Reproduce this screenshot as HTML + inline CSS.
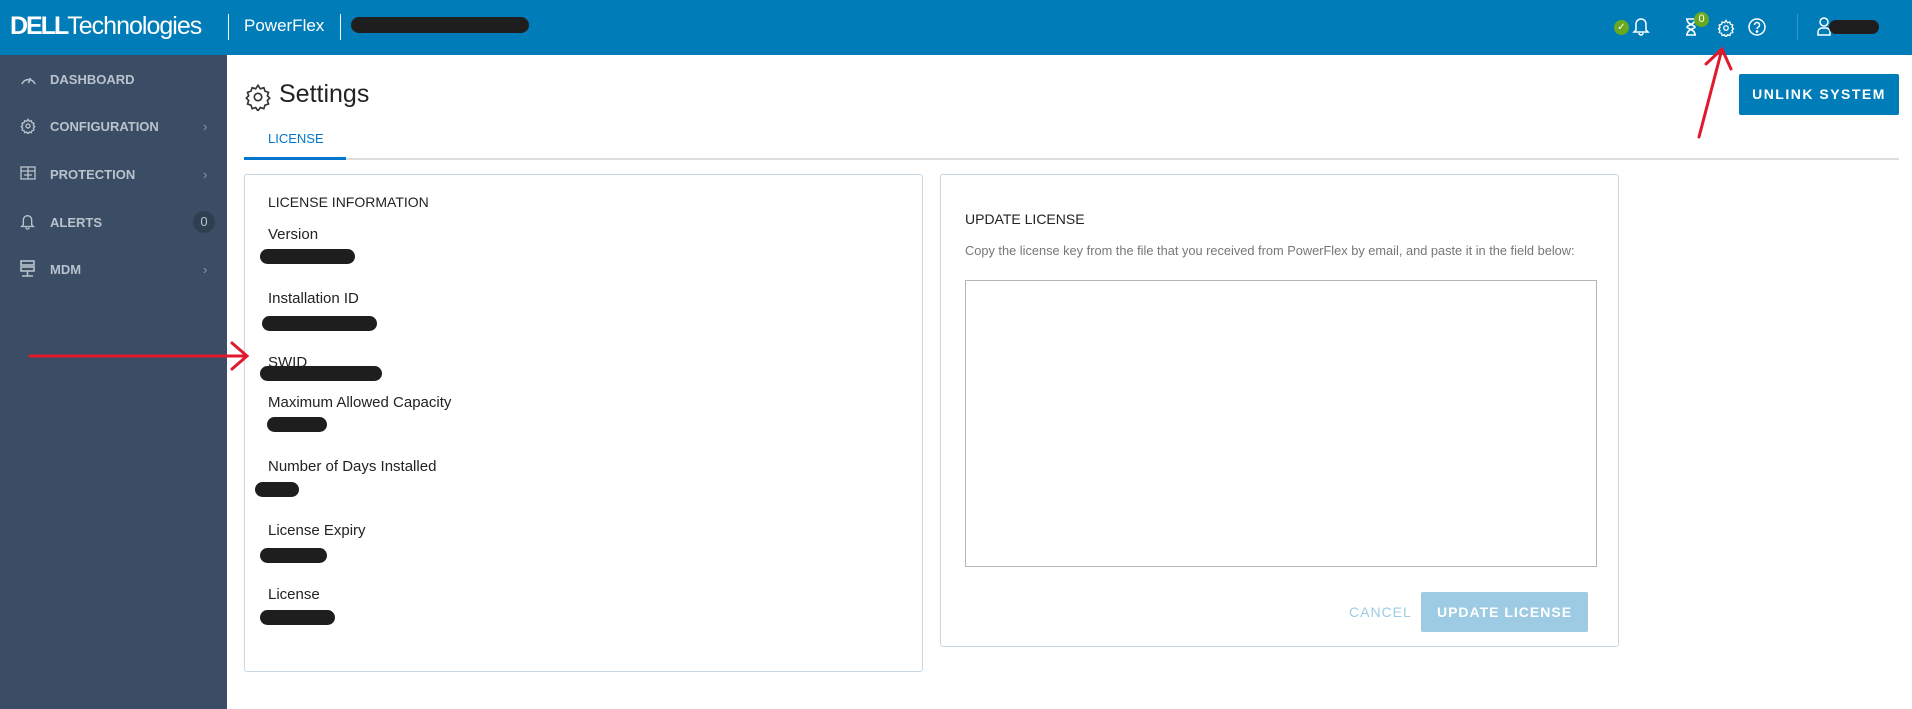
<!DOCTYPE html>
<html><head><meta charset="utf-8"><style>
*{margin:0;padding:0;box-sizing:border-box}
body{width:1912px;height:709px;position:relative;overflow:hidden;background:#fff;font-family:"Liberation Sans",sans-serif;color:#222}
.a{position:absolute}
#hd{left:0;top:0;width:1912px;height:55px;background:#007db8;color:#fff}
#sb{left:0;top:55px;width:227px;height:654px;background:#3b4d64}
.nav{position:absolute;left:50px;color:#b9c3ce;font-size:13px;font-weight:bold}
.chev{position:absolute;left:203px;color:#8b97a6;font-size:13px}
.bar{position:absolute;height:15px;background:#1e1e1e;border-radius:8px}
.lbl{position:absolute;left:268px;font-size:15px;color:#222}
.card{position:absolute;border:1px solid #c9d7e3;border-radius:3px;background:#fff}
</style></head><body>
<div id="hd" class="a">
 <div class="a" style="left:10px;top:12px;font-size:25px;letter-spacing:-1px"><b style="letter-spacing:-2px">DELL</b>Technologies</div>
 <div class="a" style="left:228px;top:14px;width:1px;height:26px;background:#fff"></div>
 <div class="a" style="left:244px;top:16px;font-size:17px">PowerFlex</div>
 <div class="a" style="left:340px;top:14px;width:1px;height:26px;background:#fff"></div>
 <div class="bar" style="left:351px;top:17px;width:178px;height:16px"></div>
 <div class="a" style="left:1614px;top:20px;width:15px;height:15px;border-radius:50%;background:#6aa91f;color:#fff;font-size:10px;text-align:center;line-height:15px">✓</div>
 <svg class="a" style="left:1632px;top:16px" width="18" height="20" viewBox="0 0 18 20" fill="none" stroke="#fff" stroke-width="1.5"><path d="M4 14V8a5 5 0 0 1 10 0v6l2 2H2z"/><path d="M7 17a2 2 0 0 0 4 0"/></svg>
 <svg class="a" style="left:1684px;top:17px" width="14" height="20" viewBox="0 0 14 20" fill="none" stroke="#fff" stroke-width="1.6"><path d="M2 2h10M2 18h10M3 2c0 6 8 6 8 8s-8 2-8 8M11 2c0 6-8 6-8 8s8 2 8 8"/></svg>
 <div class="a" style="left:1694px;top:12px;width:15px;height:15px;border-radius:50%;background:#6aa91f;font-size:11px;text-align:center;line-height:15px">0</div>
 <svg class="a" style="left:1717px;top:19px" width="18" height="18" viewBox="0 0 24 24" fill="none" stroke="#fff" stroke-width="1.8"><circle cx="12" cy="12" r="3"/><path d="M12 2l2 3 3-1 1 3 3 1-1 3 2 2-2 2 1 3-3 1-1 3-3-1-2 3-2-3-3 1-1-3-3-1 1-3-2-2 2-2-1-3 3-1 1-3 3 1z"/></svg>
 <svg class="a" style="left:1748px;top:18px" width="18" height="18" viewBox="0 0 18 18" fill="none" stroke="#fff" stroke-width="1.5"><circle cx="9" cy="9" r="8"/><path d="M6.5 7a2.5 2.5 0 1 1 3.5 2.3c-.7.4-1 .9-1 1.7"/><circle cx="9" cy="13.5" r=".6" fill="#fff"/></svg>
 <div class="a" style="left:1797px;top:14px;width:1px;height:26px;background:#3b95c9"></div>
 <svg class="a" style="left:1817px;top:17px" width="14" height="19" viewBox="0 0 14 19" fill="none" stroke="#fff" stroke-width="1.5"><circle cx="7" cy="5" r="4"/><path d="M1 18v-3a4 4 0 0 1 4-4h4a4 4 0 0 1 4 4v3z"/></svg>
 <div class="bar" style="left:1829px;top:20px;width:50px;height:14px"></div>
</div>
<div id="sb" class="a">
 <svg class="a" style="left:20px;top:18px" width="17" height="12" viewBox="0 0 17 12" fill="none" stroke="#b9c3ce" stroke-width="1.6"><path d="M2 11A7 7 0 0 1 15 11M8.5 10l2-5"/></svg>
 <div class="nav" style="top:17px">DASHBOARD</div>
 <svg class="a" style="left:20px;top:63px" width="16" height="16" viewBox="0 0 24 24" fill="none" stroke="#b9c3ce" stroke-width="2"><circle cx="12" cy="12" r="3"/><path d="M12 2l2 3 3-1 1 3 3 1-1 3 2 2-2 2 1 3-3 1-1 3-3-1-2 3-2-3-3 1-1-3-3-1 1-3-2-2 2-2-1-3 3-1 1-3 3 1z"/></svg>
 <div class="nav" style="top:64px">CONFIGURATION</div><div class="chev" style="top:64px">›</div>
 <svg class="a" style="left:20px;top:111px" width="16" height="14" viewBox="0 0 16 14" fill="none" stroke="#b9c3ce" stroke-width="1.3"><rect x="1" y="1" width="14" height="12"/><path d="M1 5h14M8 1v12M4 9h8"/></svg>
 <div class="nav" style="top:112px">PROTECTION</div><div class="chev" style="top:112px">›</div>
 <svg class="a" style="left:20px;top:158px" width="15" height="17" viewBox="0 0 18 20" fill="none" stroke="#b9c3ce" stroke-width="1.6"><path d="M4 14V8a5 5 0 0 1 10 0v6l2 2H2z"/><path d="M7 17a2 2 0 0 0 4 0"/></svg>
 <div class="nav" style="top:160px">ALERTS</div>
 <div class="a" style="left:193px;top:156px;width:22px;height:22px;border-radius:50%;background:#2f3f52;color:#b9c3ce;font-size:13px;text-align:center;line-height:22px">0</div>
 <svg class="a" style="left:20px;top:205px" width="15" height="18" viewBox="0 0 15 18" fill="none" stroke="#b9c3ce" stroke-width="1.6"><rect x="1" y="1" width="13" height="4"/><rect x="1" y="7" width="13" height="4"/><path d="M7.5 11v5M2 16h11"/></svg>
 <div class="nav" style="top:207px">MDM</div><div class="chev" style="top:207px">›</div>
</div>
<svg class="a" style="left:244px;top:83px" width="28" height="28" viewBox="0 0 24 24" fill="none" stroke="#333" stroke-width="1.4"><circle cx="12" cy="12" r="3.2"/><path d="M12 2l2 3 3-1 1 3 3 1-1 3 2 2-2 2 1 3-3 1-1 3-3-1-2 3-2-3-3 1-1-3-3-1 1-3-2-2 2-2-1-3 3-1 1-3 3 1z"/></svg>
<div class="a" style="left:279px;top:80px;font-size:25px;color:#222">Settings</div>
<div class="a" style="left:268px;top:131px;font-size:13px;color:#0076ce">LICENSE</div>
<div class="a" style="left:244px;top:158px;width:1655px;height:2px;background:#ddd"></div>
<div class="a" style="left:244px;top:157px;width:102px;height:3px;background:#0076ce"></div>
<div class="a" style="left:1739px;top:74px;width:160px;height:41px;background:#007db8;border-radius:2px;color:#fff;font-weight:bold;font-size:14px;letter-spacing:1.5px;text-align:center;line-height:41px">UNLINK SYSTEM</div>
<div class="card" style="left:244px;top:174px;width:679px;height:498px"></div>
<div class="lbl" style="top:194px;font-size:14px">LICENSE INFORMATION</div>
<div class="lbl" style="top:226px">Version</div>
<div class="lbl" style="top:290px">Installation ID</div>
<div class="lbl" style="top:354px">SWID</div>
<div class="lbl" style="top:394px">Maximum Allowed Capacity</div>
<div class="lbl" style="top:458px">Number of Days Installed</div>
<div class="lbl" style="top:522px">License Expiry</div>
<div class="lbl" style="top:586px">License</div>
<div class="bar" style="left:260px;top:249px;width:95px"></div>
<div class="bar" style="left:262px;top:316px;width:115px"></div>
<div class="bar" style="left:260px;top:366px;width:122px"></div>
<div class="bar" style="left:267px;top:417px;width:60px"></div>
<div class="bar" style="left:255px;top:482px;width:44px"></div>
<div class="bar" style="left:260px;top:548px;width:67px"></div>
<div class="bar" style="left:260px;top:610px;width:75px"></div>
<div class="card" style="left:940px;top:174px;width:679px;height:473px"></div>
<div class="a" style="left:965px;top:211px;font-size:14px">UPDATE LICENSE</div>
<div class="a" style="left:965px;top:243px;font-size:12.8px;color:#777">Copy the license key from the file that you received from PowerFlex by email, and paste it in the field below:</div>
<div class="a" style="left:965px;top:280px;width:632px;height:287px;border:1px solid #b5b5b5"></div>
<div class="a" style="left:1349px;top:604px;font-size:14px;color:#9ccbe3;letter-spacing:1px">CANCEL</div>
<div class="a" style="left:1421px;top:592px;width:167px;height:40px;background:#9ccbe3;border-radius:2px;color:#fff;font-weight:bold;font-size:14px;letter-spacing:1px;text-align:center;line-height:40px">UPDATE LICENSE</div>
<svg class="a" style="left:0;top:0" width="1912" height="709" fill="none" stroke="#e0192c" stroke-width="3" stroke-linecap="round">
<path d="M30 356H247M232 343l15 13-15 13"/>
<path d="M1699 137L1722 49M1706 64l16-15 9 20"/>
</svg>
</body></html>
